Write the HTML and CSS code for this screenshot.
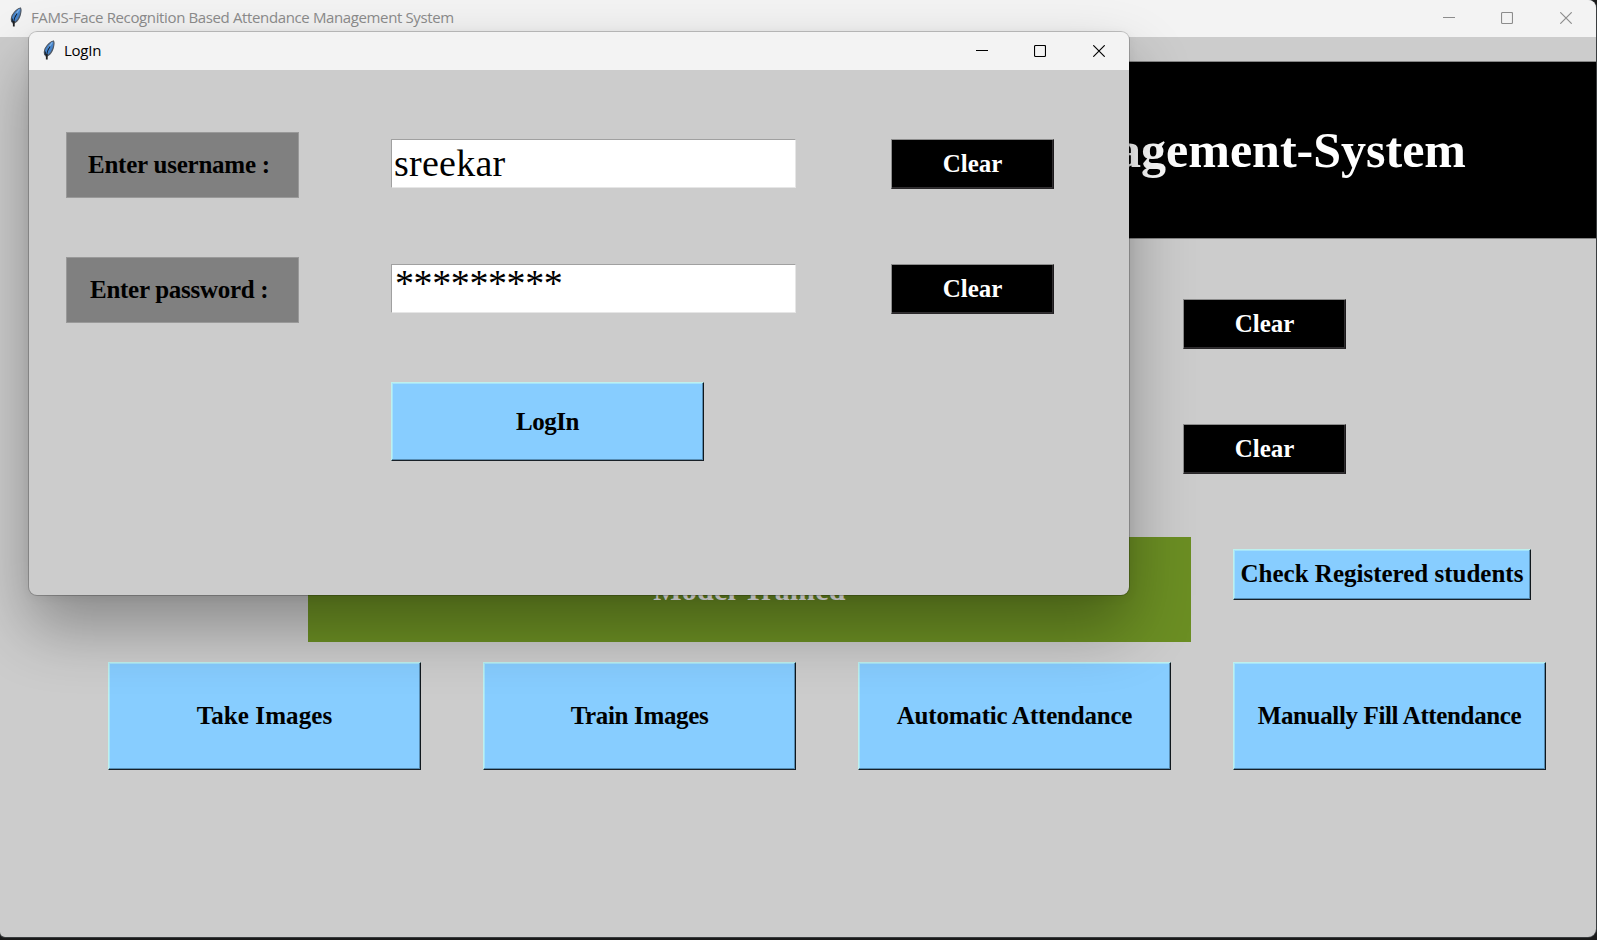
FILE: index.html
```html
<!DOCTYPE html>
<html lang="en">
<head>
<meta charset="utf-8">
<title>FAMS-Face Recognition Based Attendance Management System</title>
<link rel="stylesheet" href="styles.css">
</head>
<body>
<svg class="defs" aria-hidden="true">
  <defs>
    <symbol id="feather" viewBox="0 0 12 20">
      <path d="M10.500 1C8 1.200 4.200 4.500 2.200 8.500c-1.100 2.600-1.200 5.200.2 7L3.600 16.200 5 15.500C7.300 14 9.300 11 10.200 8c.8-2.800 1.200-5.500.3-7Z" fill="#4584cc" stroke="#505863" stroke-width="1.200"/>
      <path d="M9.400 2.400C8 4 6.500 6 5.800 8" fill="none" stroke="#7fb2e6" stroke-width="1.300"/>
      <path d="M7 6.500C5.200 9 4 12.500 3.600 15M2.300 11.500v3.500" fill="none" stroke="#15202e" stroke-width="1.100"/>
      <path d="M3.800 14V19.500" fill="none" stroke="#222" stroke-width="1.800"/>
    </symbol>
    <symbol id="minimize" viewBox="0 0 12 12"><path d="M0 5.500H12" fill="none" stroke="currentColor"/></symbol>
    <symbol id="maximize" viewBox="0 0 12 12"><rect x=".5" y=".5" width="11" height="11" rx="1" fill="none" stroke="currentColor" stroke-width="1.150"/></symbol>
    <symbol id="close" viewBox="0 0 12 12"><path d="M.3 .3 11.700 11.700M11.700 .3 .3 11.700" fill="none" stroke="currentColor" stroke-width="1.150"/></symbol>
  </defs>
</svg>
<main class="window main-window">
  <header class="titlebar">
    <svg class="feather"><use href="#feather"/></svg>
    <span class="caption">FAMS-Face Recognition Based Attendance Management System</span>
    <div class="controls"><svg><use href="#minimize"/></svg><svg><use href="#maximize"/></svg><svg><use href="#close"/></svg></div>
  </header>
  <h1 class="banner">Face-Recognition-Based-Attendance-Management-System</h1>
  <div class="clear-column">
    <button class="btn dark">Clear</button>
    <button class="btn dark">Clear</button>
  </div>
  <div class="status-row">
    <div class="status">Model Trained</div>
    <button class="btn blue check">Check Registered students</button>
  </div>
  <div class="action-row">
    <button class="btn blue take">Take Images</button>
    <button class="btn blue train">Train Images</button>
    <button class="btn blue automatic">Automatic Attendance</button>
    <button class="btn blue manual">Manually Fill Attendance</button>
  </div>
</main>
<section class="window dialog">
  <header class="titlebar">
    <svg class="feather"><use href="#feather"/></svg>
    <span class="caption">LogIn</span>
    <div class="controls"><svg><use href="#minimize"/></svg><svg><use href="#maximize"/></svg><svg><use href="#close"/></svg></div>
  </header>
  <div class="form">
    <div class="label">Enter username :</div><div class="entry">sreekar</div><button class="btn dark">Clear</button>
    <div class="label password">Enter password :</div><div class="entry secret">*********</div><button class="btn dark">Clear</button>
    <button class="btn blue login">LogIn</button>
  </div>
</section>
</body>
</html>
```

FILE: styles.css
```css
* { box-sizing: border-box; }
body {
  position: relative;
  width: 1597px;
  height: 940px;
  margin: 0;
  overflow: hidden;
  background: #1a1a1a;
  font-family: "Liberation Serif", serif;
}
.defs { position: absolute; width: 0; height: 0; }
.window { background: #ccc; overflow: hidden; }
.main-window {
  width: 1596px;
  height: 937px;
  border-radius: 0 8px 8px 5px;
  box-shadow: 0 0 0 1px #3a3d3f;
}

/* Title bars */
.titlebar {
  display: flex;
  align-items: center;
  height: 37px;
  padding: 0 24px 0 10px;
  background: #f3f3f3;
  color: #8c8c8c;
  font-family: "Open Sans", sans-serif;
  font-size: 15px;
}
.feather { width: 12px; height: 20px; margin: -3px 9px 0 0; flex: none; }
.caption { letter-spacing: -0.37px; line-height: 20px; margin-top: -3px; white-space: nowrap; }
.controls { display: flex; gap: 47px; margin: -1px 0 0 auto; }
.controls svg { width: 12px; height: 12px; display: block; }
.controls svg:first-child { margin-right: -1px; }

/* Buttons */
.btn {
  padding: 0;
  border-radius: 0;
  font: bold 25px/28px "Liberation Serif", serif;
  white-space: nowrap;
}
.btn.dark {
  width: 163px;
  height: 50px;
  background: #000;
  color: #fff;
  border: 1px solid #8c8c8c;
  border-right-color: #1c1a1c;
  border-bottom-color: #2a282a;
  box-shadow: inset -1px -1px #302e30;
}
.btn.blue {
  width: 313px;
  height: 108px;
  background: #87cdff;
  color: #000;
  border: 1px solid #bdf0ee;
  border-right-color: #10171c;
  border-bottom-color: #182027;
  box-shadow: inset -1px -1px #568cb2, inset 1px 1px #a4e3fb;
}
.take { letter-spacing: 0.1px; }
.train { letter-spacing: -0.35px; }
.automatic { letter-spacing: -0.2px; }
.manual { letter-spacing: -0.36px; }

/* Main window contents */
.banner {
  height: 178px;
  margin: 24px 0 0 100px;
  padding-right: 130px;
  background: #000;
  border: 1px solid #858585;
  border-width: 1px 0;
  color: #fff;
  font-size: 50px;
  line-height: 177px;
  text-align: right;
  white-space: nowrap;
}
.clear-column {
  display: flex;
  flex-direction: column;
  gap: 75px;
  margin: 60px 0 0 1183px;
}
.status-row { display: flex; gap: 42px; margin: 63px 0 0 308px; }
.status {
  width: 883px;
  height: 105px;
  background: #6b8e23;
  color: #fff;
  font-weight: bold;
  font-size: 30px;
  line-height: 105px;
  letter-spacing: 0.2px;
  text-align: center;
}
.check.btn { width: 298px; height: 51px; margin-top: 12px; padding-bottom: 1px; }
.action-row { display: flex; gap: 62px; margin: 20px 0 0 108px; }

/* Login dialog floating above the main window */
.dialog {
  position: absolute;
  left: 29px;
  top: 32px;
  width: 1100px;
  height: 563px;
  border-radius: 8px;
  box-shadow: 0 0 0 1px rgba(0, 0, 0, .2), 0 32px 64px rgba(0, 0, 0, .33), 0 2px 12px rgba(0, 0, 0, .06);
}
.dialog .titlebar { height: 38px; padding: 0 24px 0 14px; color: #000; }
.dialog .caption { letter-spacing: -0.25px; margin-top: -2px; }
.dialog .feather { margin-top: -2px; }
.form {
  display: grid;
  grid-template-columns: 233px 405px 163px;
  column-gap: 92px;
  align-items: start;
  padding: 62px 0 0 37px;
}
.form > :nth-child(-n+3) { margin-bottom: 60px; }
.label {
  height: 66px;
  margin-bottom: -1px;
  border: 1px solid #999;
  background: #808080;
  color: #000;
  font-weight: bold;
  font-size: 25px;
  line-height: 64px;
  padding-left: 21px;
  letter-spacing: -0.23px;
}
.form > .label:first-child { margin-bottom: 59px; }
.password { padding-left: 23px; letter-spacing: -0.28px; }
.entry {
  height: 49px;
  margin-top: 7px;
  padding-left: 2px;
  background: #fff;
  border: 1px solid #a0a0a0;
  border-right-color: #e6e6e6;
  border-bottom-color: #e6e6e6;
  font-size: 38px;
  line-height: 46px;
  letter-spacing: 0.25px;
}
.secret { padding-left: 3px; line-height: 36px; letter-spacing: -0.4px; }
.form .dark { margin: 7px 0 0 3px; }
.login.btn { grid-column: 2; height: 79px; margin-top: 60px; letter-spacing: -0.5px; }
```
